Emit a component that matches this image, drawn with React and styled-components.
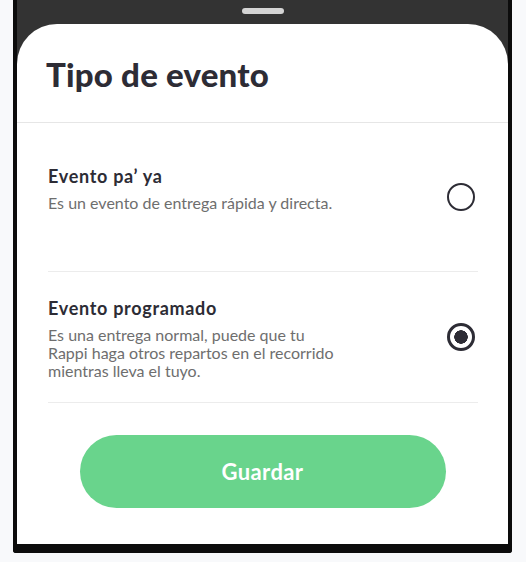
import React, { useState } from "react";
import styled, { createGlobalStyle } from "styled-components";

const GlobalStyle = createGlobalStyle`
  html, body {
    margin: 0;
    padding: 0;
    background: #f8f9fb;
    font-family: Lato, "Noto Sans", sans-serif;
  }
`;

const options = [
  {
    id: "ya",
    title: "Evento pa’ ya",
    text: "Es un evento de entrega rápida y directa.",
    tall: true,
  },
  {
    id: "programado",
    title: "Evento programado",
    text: "Es una entrega normal, puede que tu Rappi haga otros repartos en el recorrido mientras lleva el tuyo.",
  },
];

const App = () => {
  const [selected, setSelected] = useState("programado");

  return (
    <>
      <GlobalStyle />
      <Phone>
        <Handle />
        <Sheet>
          <Header>
            <Title>Tipo de evento</Title>
          </Header>
          <List>
            {options.map((o) => (
              <Option key={o.id} $tall={o.tall} onClick={() => setSelected(o.id)}>
                <OptionText $tall={o.tall}>
                  <OptionTitle>{o.title}</OptionTitle>
                  <OptionDesc>{o.text}</OptionDesc>
                </OptionText>
                <Radio $checked={selected === o.id} />
              </Option>
            ))}
          </List>
          <Footer>
            <SaveButton>Guardar</SaveButton>
          </Footer>
        </Sheet>
      </Phone>
    </>
  );
};
export default App;

const Phone = styled.div`
  margin-left: 13px;
  width: 491px;
  background: #333333;
  border: 4px solid #0c0c0c;
  border-top: 0;
  border-bottom-width: 9px;
  border-radius: 0 0 3px 3px;
  display: flex;
  flex-direction: column;
  align-items: center;
`;

const Handle = styled.div`
  width: 42px;
  height: 6px;
  margin: 8px 0 10px;
  border-radius: 3px;
  background: #d4d4d4;
`;

const Sheet = styled.div`
  align-self: stretch;
  height: 520px;
  background: #ffffff;
  border-radius: 40px 40px 0 0;
  display: flex;
  flex-direction: column;
`;

const Header = styled.div`
  height: 99px;
  box-sizing: border-box;
  padding: 30px 29px 0;
  border-bottom: 1px solid #e6e6e6;
`;

const Title = styled.h1`
  margin: 0;
  font-size: 33px;
  font-weight: 900;
  line-height: 40px;
  color: #2d2c35;
  letter-spacing: 0.2px;
`;

const List = styled.div`
  padding: 0 30px 0 31px;
`;

const Option = styled.div`
  display: flex;
  justify-content: space-between;
  align-items: center;
  min-height: ${(p) => (p.$tall ? "149px" : "0")};
  box-sizing: border-box;
  border-bottom: 1px solid #ececec;
  cursor: pointer;
`;

const OptionText = styled.div`
  align-self: flex-start;
  max-width: 295px;
  padding: ${(p) => (p.$tall ? "42px 0 0" : "25px 0 22px")};
`;

const OptionTitle = styled.div`
  font-size: 18px;
  font-weight: 700;
  line-height: 22px;
  letter-spacing: 0.7px;
  color: #2d2c35;
`;

const OptionDesc = styled.div`
  margin-top: 7px;
  font-size: 16px;
  line-height: 18px;
  color: #6e6e6e;
`;

const Radio = styled.span`
  flex: none;
  width: 28px;
  height: 28px;
  margin-right: 3px;
  box-sizing: border-box;
  border-radius: 50%;
  border: ${(p) => (p.$checked ? "3.5px" : "2.5px")} solid #2d2c35;
  background: ${(p) =>
    p.$checked ? "radial-gradient(circle, #2d2c35 0 6.5px, #fff 7px)" : "#fff"};
`;

const Footer = styled.div`
  display: flex;
  justify-content: center;
  padding-top: 32px;
`;

const SaveButton = styled.button`
  width: 366px;
  height: 73px;
  border: 0;
  border-radius: 37px;
  background: #69d48c;
  color: #ffffff;
  font-family: inherit;
  font-size: 22px;
  font-weight: 700;
  letter-spacing: 0.4px;
  cursor: pointer;
`;
